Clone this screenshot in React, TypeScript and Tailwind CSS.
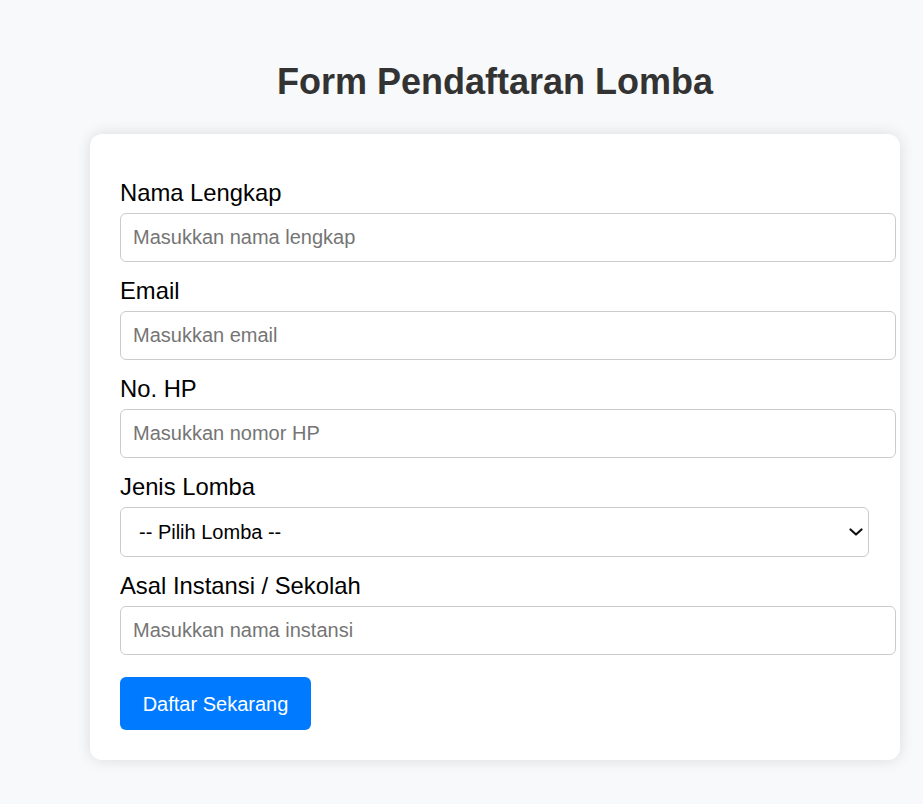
import type { ReactNode } from "react";

const font = { fontFamily: '"Liberation Sans", Arial, sans-serif' };

function Field({ label, children }: { label: string; children: ReactNode }) {
  return (
    <div className="mb-[16px]">
      <label className="mb-[7px] block text-[23.8px] leading-[26px] text-black">{label}</label>
      {children}
    </div>
  );
}

function TextInput({ placeholder, type = "text" }: { placeholder: string; type?: string }) {
  return (
    <input
      type={type}
      placeholder={placeholder}
      className="block h-[49px] w-[776px] rounded-[6px] border border-[#cccccc] bg-white px-[12px] text-[20px] text-black placeholder:text-[#757575] outline-none"
    />
  );
}

export default function App() {
  return (
    <div className="min-h-[804px] bg-[#f8f9fa] pt-[61px]" style={font}>
      <div className="ml-[90px] w-[810px]">
        <h2 className="text-center text-[36px] font-bold leading-[41px] text-[#333333]">
          Form Pendaftaran Lomba
        </h2>
        <form
          className="mt-[32px] rounded-[12px] bg-white px-[30px] pt-[46px] pb-[30px] shadow-[0_0_15px_rgba(0,0,0,0.12)]"
          onSubmit={(e) => e.preventDefault()}
        >
          <Field label="Nama Lengkap">
            <TextInput placeholder="Masukkan nama lengkap" />
          </Field>
          <Field label="Email">
            <TextInput type="email" placeholder="Masukkan email" />
          </Field>
          <Field label="No. HP">
            <TextInput type="tel" placeholder="Masukkan nomor HP" />
          </Field>
          <Field label="Jenis Lomba">
            <div className="relative w-[749px]">
              <select
                defaultValue=""
                className="block h-[50px] w-full appearance-none rounded-[6px] border border-[#cccccc] bg-white pl-[18px] pr-[32px] text-[20px] text-black outline-none"
              >
                <option value="">-- Pilih Lomba --</option>
                <option value="desain">Desain Poster</option>
                <option value="coding">Coding</option>
                <option value="esai">Esai</option>
              </select>
              <svg
                className="pointer-events-none absolute right-[6px] top-[19px]"
                width="14"
                height="12"
                viewBox="0 0 14 12"
                fill="none"
              >
                <path d="M1.5 3.5 L7 8.5 L12.5 3.5" stroke="#111" strokeWidth="2.2" strokeLinecap="round" strokeLinejoin="round" />
              </svg>
            </div>
          </Field>
          <Field label="Asal Instansi / Sekolah">
            <TextInput placeholder="Masukkan nama instansi" />
          </Field>
          <button
            type="submit"
            className="mt-[6px] h-[53px] w-[191px] rounded-[6px] bg-[#007bff] text-[20px] text-white"
          >
            Daftar Sekarang
          </button>
        </form>
      </div>
    </div>
  );
}
